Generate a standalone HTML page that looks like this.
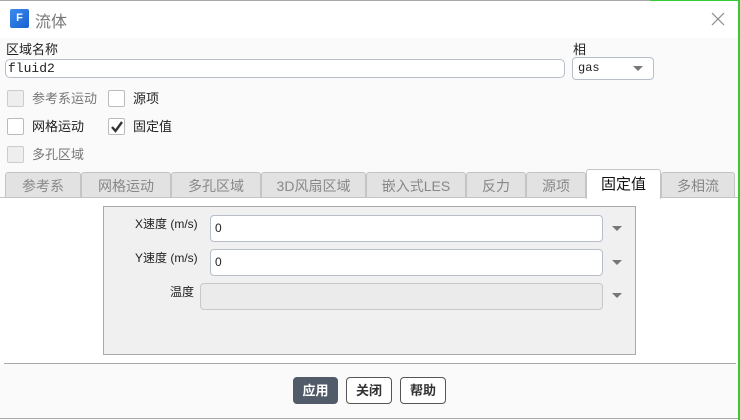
<!DOCTYPE html>
<html><head><meta charset="utf-8"><style>
*{box-sizing:border-box;margin:0;padding:0}
body{width:740px;height:420px;background:#fafafa;font-family:"Liberation Sans","Noto Sans CJK SC",sans-serif;font-size:13px;color:#222;position:relative;overflow:hidden}
.a{position:absolute}
.cb{position:absolute;width:17px;height:17px;border:1px solid #bbb;background:#fff;border-radius:2px}
.cb.d{background:#eee;border-color:#ccc}
.lbl{position:absolute;font-size:13px;line-height:17px}
.tab{position:absolute;top:172px;height:26px;background:#e2e2e2;border:1px solid #c4c4c4;border-bottom:none;color:#888;font-size:14px;text-align:center;line-height:26px;border-radius:3px 3px 0 0}
.inp{position:absolute;background:#fff;border:1px solid #b8bec8;border-radius:4px}
.arr{position:absolute;width:0;height:0;border-left:5px solid transparent;border-right:5px solid transparent;border-top:5px solid #777}
.btn{position:absolute;top:377px;height:27px;border:1px solid #555;border-radius:4px;background:#fff;font-size:13px;font-weight:bold;text-align:center;line-height:25px;color:#333}
</style></head><body>
<div class="a" style="left:0;top:0;width:740px;height:38px;background:#fff"></div>
<div class="a" style="left:0;top:0;width:740px;height:1px;background:#aaa"></div>
<div class="a" style="left:650px;top:0;width:90px;height:1px;background:#3c3"></div>
<div class="a" style="right:0;top:0;width:2px;height:420px;background:#3c3"></div>
<div class="a" style="left:10px;top:9px;width:19px;height:19px;background:linear-gradient(135deg,#3a8cf0,#1a5fd0);border-radius:2px;color:#fff;font-weight:bold;font-size:11px;text-align:center;line-height:19px">F</div>
<div class="a" style="left:35px;top:8px;font-size:16px;color:#777">流体</div>
<svg class="a" style="left:711px;top:12px" width="14" height="14"><path d="M1 1L13 13M13 1L1 13" stroke="#888" stroke-width="1.2"/></svg>

<div class="lbl" style="left:6px;top:41px">区域名称</div>
<div class="inp" style="left:5px;top:59px;width:560px;height:19px;border-radius:5px"></div>
<div class="a" style="left:8px;top:61px;font-family:'Liberation Mono',monospace;font-size:13px">fluid2</div>
<div class="lbl" style="left:573px;top:41px">相</div>
<div class="inp" style="left:572px;top:57px;width:82px;height:23px"></div>
<div class="a" style="left:578px;top:61px;font-family:'Liberation Mono',monospace;font-size:12px">gas</div>
<div class="arr" style="left:633px;top:66px"></div>

<div class="cb d" style="left:7px;top:90px"></div><div class="lbl" style="left:32px;top:90px;color:#777">参考系运动</div>
<div class="cb" style="left:108px;top:90px"></div><div class="lbl" style="left:133px;top:90px">源项</div>
<div class="cb" style="left:7px;top:118px"></div><div class="lbl" style="left:32px;top:118px">网格运动</div>
<div class="cb" style="left:108px;top:118px"></div><svg class="a" style="left:111px;top:121px" width="12" height="12"><path d="M1 6L4.5 10L11 1" stroke="#333" stroke-width="2.4" fill="none"/></svg><div class="lbl" style="left:133px;top:118px">固定值</div>
<div class="cb d" style="left:7px;top:146px"></div><div class="lbl" style="left:32px;top:146px;color:#777">多孔区域</div>

<div class="a" style="left:0;top:198px;width:738px;height:166px;background:#fff"></div>
<div class="tab" style="left:5px;width:76px">参考系</div>
<div class="tab" style="left:81px;width:90px">网格运动</div>
<div class="tab" style="left:171px;width:90px">多孔区域</div>
<div class="tab" style="left:261px;width:105px">3D风扇区域</div>
<div class="tab" style="left:366px;width:100px">嵌入式LES</div>
<div class="tab" style="left:466px;width:60px">反力</div>
<div class="tab" style="left:526px;width:60px">源项</div>
<div class="tab" style="left:586px;top:169px;height:30px;width:75px;background:#fff;color:#111;line-height:30px;font-size:15px">固定值</div>
<div class="tab" style="left:661px;width:74px">多相流</div>
<div class="a" style="left:0;top:197px;width:586px;height:1px;background:#c4c4c4"></div>
<div class="a" style="left:661px;top:197px;width:77px;height:1px;background:#c4c4c4"></div>

<div class="a" style="left:103px;top:206px;width:533px;height:149px;background:#f0f0f0;border:1px solid #aaa"></div>
<div class="lbl" style="left:135px;top:216px;font-size:12px">X速度 (m/s)</div>
<div class="inp" style="left:210px;top:215px;width:393px;height:27px"></div>
<div class="a" style="left:215px;top:221px;font-size:12px">0</div>
<div class="arr" style="left:612px;top:226px"></div>
<div class="lbl" style="left:135px;top:250px;font-size:12px">Y速度 (m/s)</div>
<div class="inp" style="left:210px;top:249px;width:393px;height:27px"></div>
<div class="a" style="left:215px;top:255px;font-size:12px">0</div>
<div class="arr" style="left:612px;top:260px"></div>
<div class="lbl" style="left:170px;top:284px;font-size:12px">温度</div>
<div class="inp" style="left:200px;top:283px;width:403px;height:27px;background:#ebebeb;border-color:#c8c8c8"></div>
<div class="arr" style="left:612px;top:293px"></div>

<div class="a" style="left:4px;top:363px;width:732px;height:1px;background:#aaa"></div>
<div class="btn" style="left:293px;width:45px;background:#515b69;color:#fff;border-color:#515b69">应用</div>
<div class="btn" style="left:346px;width:46px">关闭</div>
<div class="btn" style="left:400px;width:46px">帮助</div>
<div class="a" style="left:0;top:418px;width:738px;height:1px;background:#aaa"></div>
</body></html>
